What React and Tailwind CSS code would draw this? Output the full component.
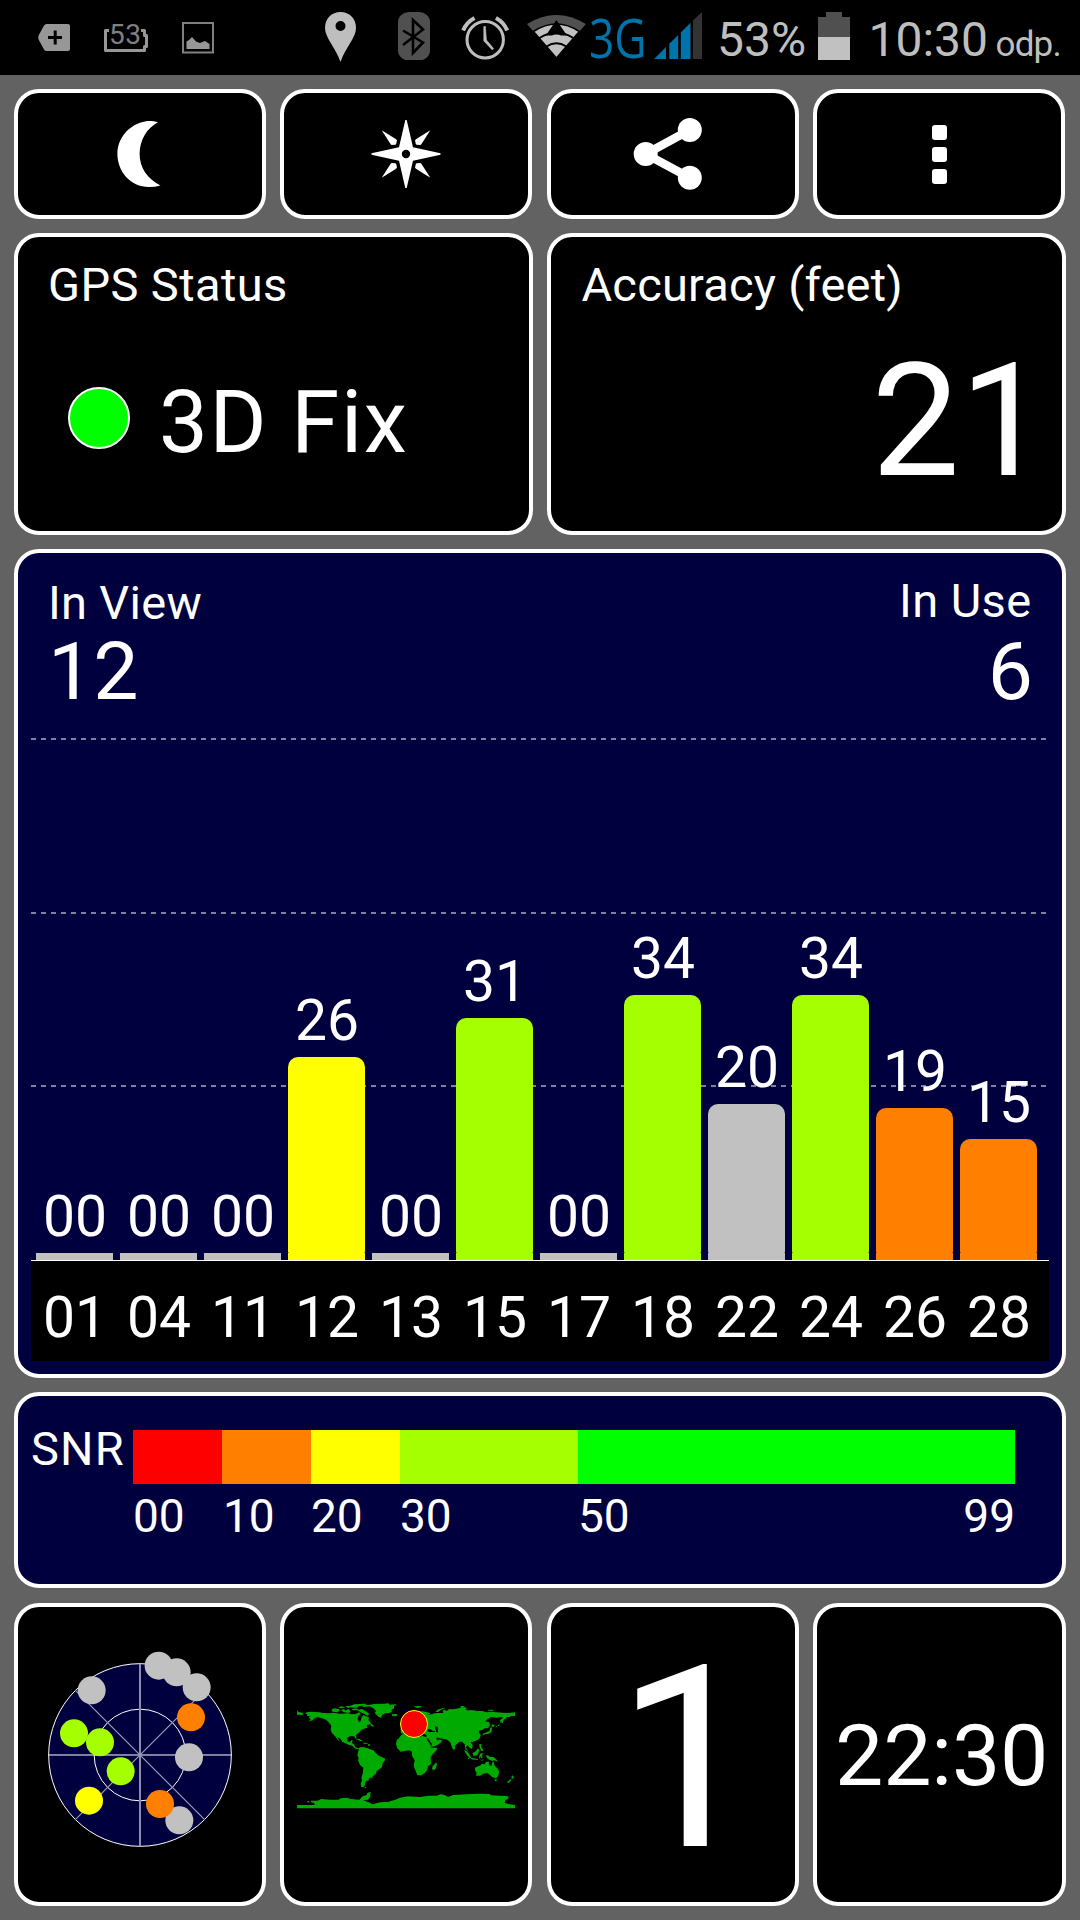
const satellites = [
  { prn: '01', snr: '00', height: 'h-[7px]', color: 'bg-[#c1c1c1]' },
  { prn: '04', snr: '00', height: 'h-[7px]', color: 'bg-[#c1c1c1]' },
  { prn: '11', snr: '00', height: 'h-[7px]', color: 'bg-[#c1c1c1]' },
  { prn: '12', snr: '26', height: 'h-[203px]', color: 'bg-[#ffff00]' },
  { prn: '13', snr: '00', height: 'h-[7px]', color: 'bg-[#c1c1c1]' },
  { prn: '15', snr: '31', height: 'h-[242px]', color: 'bg-[#a6ff00]' },
  { prn: '17', snr: '00', height: 'h-[7px]', color: 'bg-[#c1c1c1]' },
  { prn: '18', snr: '34', height: 'h-[265px]', color: 'bg-[#a6ff00]' },
  { prn: '22', snr: '20', height: 'h-[156px]', color: 'bg-[#c1c1c1]' },
  { prn: '24', snr: '34', height: 'h-[265px]', color: 'bg-[#a6ff00]' },
  { prn: '26', snr: '19', height: 'h-[152px]', color: 'bg-[#ff8000]' },
  { prn: '28', snr: '15', height: 'h-[121px]', color: 'bg-[#ff8000]' },
];

// Positions on the sky plot, in thirds of a pixel.
const sky = [
  [530, 216, '#c1c1c1'],
  [476, 196, '#c1c1c1'],
  [590, 261, '#c1c1c1'],
  [275, 270, '#c1c1c1'],
  [573, 351, '#ff8000'],
  [222, 399, '#a6ff00'],
  [300, 426, '#a6ff00'],
  [567, 471, '#c1c1c1'],
  [362, 513, '#a6ff00'],
  [267, 601, '#ffff00'],
  [538, 660, '#c1c1c1'],
  [480, 611, '#ff8000'],
];

function Panel({ className = '', children }) {
  return (
    <div className={`box-border shrink-0 rounded-[25px] border-4 border-white ${className}`}>
      {children}
    </div>
  );
}

function StatusBar() {
  return (
    <div className="flex h-[75px] shrink-0 items-start bg-black text-[#bebebe]">
      <svg className="ml-[38px] mt-6 h-[27px] w-8" viewBox="0 0 32 27">
        <path d="M8.5 0H30a2 2 0 0 1 2 2v23a2 2 0 0 1-2 2H8.5Q7 27 6 25.500L0.600 15.500Q0 13.500 .6 11.500L6 1.500Q7 0 8.500 0Z" fill="#979797" />
        <path d="M17.200 6.500v14M10 13.500h14" stroke="#000" strokeWidth="3" />
      </svg>
      <div className="relative ml-[34px] mt-[29px] h-[23px] w-11 text-[#808080]">
        <svg className="h-[23px] w-11" viewBox="0 0 44 23">
          <path d="M5 1.500H1.500V21.500H40.500V17.500H42.500V6.500H40.500V1.500H37" fill="none" stroke="#979797" strokeWidth="3" strokeLinejoin="round" />
        </svg>
        <span className="absolute left-[5px] top-[-8px] text-[28px] leading-none tracking-[0.5px]">53</span>
      </div>
      <svg className="ml-[34px] mt-[22px] h-8 w-8" viewBox="0 0 32 32">
        <rect x="1" y="1" width="30" height="29.500" fill="none" stroke="#808080" strokeWidth="2" />
        <path d="M4.500 27V19.500L7 18l3-3 4 4.500 4 1.500 5-2 4.500 3V27Z" fill="#979797" />
      </svg>
      <svg className="ml-[111px] mt-3 h-[50px] w-[31px]" viewBox="0 0 31 50">
        <path fillRule="evenodd" d="M15.500 0C24.500 0 31 6.500 31 16c0 10-11 20-15.500 34C11 36 0 26 0 16 0 6.500 6.500 0 15.500 0Zm0 9a5 5 0 1 0 0 10 5 5 0 0 0 0-10Z" fill="#bebebe" />
      </svg>
      <svg className="ml-[42px] mt-3 h-12 w-8" viewBox="0 0 32 48">
        <rect width="32" height="48.500" rx="11" ry="10" fill="#505050" />
        <path d="M5 18.500L25 30.500 15 41V8L25 17.500 5 33" fill="none" stroke="#000" strokeWidth="2.600" />
      </svg>
      <svg className="ml-[31px] mt-[15px] h-[46px] w-12" viewBox="461 15 48 46" fill="none" stroke="#bebebe">
        <circle cx="485.200" cy="39.700" r="18.200" strokeWidth="3" />
        <path d="M463.200 30.500A25 25 0 0 1 474.500 18M495.900 18A25 25 0 0 1 507.200 30.500" strokeWidth="4" />
        <path d="M483.800 26.500h1.600l1 13.500 7.200 8.600-1.300 1.300-8.500-9z" fill="#bebebe" strokeWidth=".6" />
      </svg>
      <svg className="ml-[18px] mt-[14px] h-[45px] w-[60px]" viewBox="527 14 60 45">
        <path d="M556.400 58L527 24Q556.400 6 585.900 24Z" fill="#505050" />
        <path d="M556.400 58L533.500 31.500Q556.400 16.500 579.300 31.500Z" fill="#c1c1c1" stroke="#000" strokeWidth="1.500" />
        <path d="M539.500 38Q556.400 27.500 573.300 38M546.500 46.500Q556.400 40 566.300 46.500" fill="none" stroke="#000" strokeWidth="2" />
        <path d="M556.400 20L567 35.500H560.500L556.400 31L552.300 35.500H545.800Z" fill="#000" />
        <path d="M552 28h8.800v7q-4.400-1.200-8.800 0z" fill="#000" />
      </svg>
      <div className="ml-[3px] mt-[9px] h-[56px] w-[54px]">
        <span className="inline-block origin-top-left translate-x-[-1px] scale-x-[0.82] whitespace-nowrap font-['Open_Sans'] text-[54px] leading-[56px] text-[#0073ab]">3G</span>
      </div>
      <svg className="ml-[10px] mt-3 h-[47px] w-12" viewBox="654 12 48 47">
        <path d="M654 59L666 47V59ZM669.300 59V43.800L678.200 34.900V59ZM680.800 59V32.500L690.500 22.800V59Z" fill="#0073ab" />
        <path d="M693 59V20.500L702 12V59Z" fill="#333" />
      </svg>
      <span className="ml-[15px] mt-[15.5px] w-[91px] whitespace-nowrap text-[48px] leading-none">53%</span>
      <svg className="ml-[10px] mt-3 h-12 w-8" viewBox="0 0 32 48">
        <path d="M0 5H8V0H24V5H32V26H0Z" fill="#505050" />
        <rect y="25" width="32" height="23" fill="#c1c1c1" />
      </svg>
      <span className="ml-[18.5px] mt-[15.5px] w-[127px] whitespace-nowrap text-[48px] leading-none">10:30</span>
      <span className="mt-[26.5px] whitespace-nowrap text-[35px] leading-none tracking-[-0.8px]">odp.</span>
    </div>
  );
}

function Toolbar() {
  const tile = 'flex h-[130px] w-[252px] items-center justify-center bg-black';
  return (
    <div className="mt-[14px] flex shrink-0 gap-[14px] pl-[14px]">
      <Panel className={tile}>
        <svg className="h-[70px] w-[70px]" viewBox="105 119 70 70">
          <path d="M158 122.300C154 120.800 149 120.700 146 121.200C129 124 117.400 138 117.400 154C117.400 171 130 187 149 187Q155 187 160.500 185.400C147 179 139.600 167 139.600 154C139.600 140 147 128 158 122.300Z" fill="#fff" />
        </svg>
      </Panel>
      <Panel className={tile}>
        <svg className="h-[70px] w-[70px]" viewBox="-35 -35 70 70" fill="#fff">
          <path fillRule="evenodd" d="M-.7-34H.7L7-6.800 34.500-.7V.7L7 6.800.7 34H-.7L-7 6.800-34.500.7V-.7L-7-6.800ZM0-4.200A4.200 4.200 0 1 0 0 4.200 4.200 4.200 0 0 0 0-4.200Z" />
          <path d="M-24.300-23.800L-10.300-15-9-13.800-9.800-10-10.500-9.300-14.500-9-15.500-10Z" />
          <path d="M24.300-23.800L10.300-15 9-13.800 9.800-10 10.500-9.300 14.500-9 15.500-10Z" />
          <path d="M-24.300 23.800L-10.300 15-9 13.800-9.800 10-10.500 9.300-14.500 9-15.500 10Z" />
          <path d="M24.300 23.800L10.300 15 9 13.800 9.800 10 10.500 9.300 14.500 9 15.500 10Z" />
        </svg>
      </Panel>
      <Panel className={`${tile} ml-px`}>
        <svg className="h-[76px] w-[76px] overflow-visible" viewBox="635 116 76 76" fill="#fff">
          <path d="M689.800 130L645.700 154L689.800 177.700" fill="none" stroke="#fff" strokeWidth="8.500" />
          <circle cx="645.700" cy="154" r="12" />
          <circle cx="689.800" cy="130" r="12" />
          <circle cx="689.800" cy="177.800" r="12" />
        </svg>
      </Panel>
      <Panel className={tile}>
        <div className="flex flex-col gap-[7px]">
          <div className="h-[15px] w-[15px] rounded-[3px] bg-white" />
          <div className="h-[15px] w-[15px] rounded-[3px] bg-white" />
          <div className="h-[15px] w-[15px] rounded-[3px] bg-white" />
        </div>
      </Panel>
    </div>
  );
}

function Chart() {
  return (
    <Panel className="mx-[14px] mt-[14px] flex h-[829px] flex-col bg-[#00003f]">
      <div className="flex h-[185px] shrink-0 justify-between pl-[30px] pr-[31px]">
        <div className="flex flex-col pt-[26px]">
          <span className="text-[47px] leading-none tracking-[0.3px]">In View</span>
          <span className="mt-[6px] text-[80.5px] leading-none">12</span>
        </div>
        <div className="flex flex-col items-end pt-6">
          <span className="-mr-[0.5px] text-[47px] leading-none tracking-[0.4px]">In Use</span>
          <span className="-mr-[2px] mt-[8px] text-[80.5px] leading-none">6</span>
        </div>
      </div>
      <div className="relative mx-[13px] h-[522px] shrink-0">
        <div className="absolute left-0 top-0 h-[2px] w-[1015px] bg-[repeating-linear-gradient(90deg,#8080a0_0px,#8080a0_5px,transparent_5px,transparent_10px)]" />
        <div className="absolute left-0 top-[174px] h-[2px] w-[1015px] bg-[repeating-linear-gradient(90deg,#8080a0_0px,#8080a0_5px,transparent_5px,transparent_10px)]" />
        <div className="absolute left-0 top-[347px] h-[2px] w-[1015px] bg-[repeating-linear-gradient(90deg,#8080a0_0px,#8080a0_5px,transparent_5px,transparent_10px)]" />
        <div className="relative flex h-full items-end gap-[7px] pl-[5px]">
          {satellites.map((s) => (
            <div key={s.prn} className="flex w-[77px] flex-col items-center">
              <span className="mb-[8px] pl-px text-[57px] leading-none">{s.snr}</span>
              {s.snr === '00' ? (
                <div className={`w-full ${s.height} ${s.color}`} />
              ) : (
                <div className={`flex w-full flex-col ${s.height}`}>
                  <div className={`w-full grow rounded-b-[1.5px] rounded-t-[10px] ${s.color}`} />
                  <div className={`h-[7px] w-full shrink-0 ${s.color}`} />
                </div>
              )}
            </div>
          ))}
        </div>
      </div>
      <div className="mx-[13px] flex h-[101px] shrink-0 gap-[7px] border-t border-white bg-black pl-[5px] pt-[28px]">
        {satellites.map((s) => (
          <span key={s.prn} className="w-[77px] pl-px text-center text-[57px] leading-none">{s.prn}</span>
        ))}
      </div>
    </Panel>
  );
}

function SnrLegend() {
  return (
    <Panel className="mx-[14px] mt-[14px] flex h-[196px] bg-[#00003f] text-[46px] leading-none">
      <span className="w-[115px] shrink-0 pl-[13px] pt-[29px] text-[47px] tracking-[1.2px]">SNR</span>
      <div className="flex flex-col pt-[34px]">
        <div className="flex h-[54px]">
          <div className="w-[89px] bg-[#ff0000]" />
          <div className="w-[89px] bg-[#ff8000]" />
          <div className="w-[89px] bg-[#ffff00]" />
          <div className="w-[178px] bg-[#a6ff00]" />
          <div className="w-[437px] bg-[#00ff00]" />
        </div>
        <div className="mt-[9px] flex">
          <span className="w-[89px]">00</span>
          <span className="w-[89px] pl-px">10</span>
          <span className="w-[89px]">20</span>
          <span className="w-[178px]">30</span>
          <span className="grow">50</span>
          <span>99</span>
        </div>
      </div>
    </Panel>
  );
}

function SkyPlot() {
  return (
    <svg className="h-[196px] w-[196px] overflow-visible" viewBox="126 169 588 588">
      <circle cx="420" cy="463" r="274" fill="#00003f" stroke="#fff" strokeWidth="3" />
      <circle cx="420" cy="463" r="137.500" fill="none" stroke="#fff" strokeWidth="3" />
      <path d="M146 463H694" stroke="#fff" strokeWidth="3" />
      <path d="M420 189V737" stroke="#8c8cab" strokeWidth="6" />
      <path d="M226 269L614 657M614 269L226 657" stroke="#9c9cb6" strokeWidth="3.500" />
      {sky.map(([x, y, fill]) => (
        <circle key={`${x}-${y}`} cx={x} cy={y - 1} r="42" fill={fill} />
      ))}
    </svg>
  );
}

function WorldMap() {
  return (
    <svg className="mt-[2px] h-[106px] w-[218px]" viewBox="51 68 654 318" fill="#0a0">
      {/* North and Central America */}
      <path d="M51 90L56 95 70 98 68 104 51 103ZM80 96L92 94 120 96 128 98 150 99 160 97 180 100 205 99 214 102 226 101 238 96 242 100 236 106 232 116 238 126 242 122 244 112 250 104 258 108 266 110 266 120 272 128 280 138 272 132 260 134 262 142 250 146 244 148 238 156 230 162 228 166 230 178 226 174 222 168 210 167 202 172 202 182 208 186 214 180 218 180 216 188 222 192 226 200 234 204 244 200 240 206 228 206 216 196 206 193 194 188 186 184 182 176 172 170 178 182 174 180 164 166 156 158 152 148 154 136 146 126 138 118 126 114 112 110 104 114 98 120 84 124 92 118 86 110 92 108 80 106 82 102 76 100Z" />
      <path d="M154 88l8-4 14 2 4 6-10 4-12-2zM182 90l10-4 4 6 8-6 8 6-4 6-16-2zM174 80l12-2 10 4-14 2zM196 78l10-2 8 4-10 3zM208 78l14-6 18-1 22-1-8 5-16 2-8 5-12 0zM216 86l12-2 8 4 10-2 6 4 8 4 8 8-6 4-10-6-10-4-10-6-14 0z" />
      <path d="M242 76L256 74 270 73 282 71 310 70 326 69 328 73 346 72 352 74 342 76 342 84 334 90 336 94 328 98 316 99 306 104 304 112 296 110 290 104 284 98 288 92 280 84 268 78 252 80Z" />
      <path d="M336 102l14-1 4 3-8 4-10-1zM228 176l10 0 10 6-8 0zM250 187l12 0 0 3-12 0zM264 192h6v4h-6zM272 130l10 6-2 3-8-3z" />
      {/* South America */}
      <path d="M236 208L240 202 248 200 264 204 270 207 280 210 290 220 296 226 304 229 316 235 314 242 308 248 306 260 296 268 290 272 288 280 278 288 278 292 268 292 266 300 256 304 256 310 252 320 244 320 242 310 246 300 244 294 248 280 250 262 240 254 234 240 236 234 232 224Z" />
      <path d="M254 321h4v3h-4z" />
      {/* Africa and Madagascar */}
      <path d="M362 166L372 158 400 154 404 164 420 170 426 166 438 170 442 180 450 192 454 202 472 202 468 212 458 222 452 230 452 240 454 250 444 258 442 268 434 278 424 285 412 285 408 274 402 260 402 250 404 240 396 226 396 214 388 210 374 212 362 214 352 204 348 192 350 180 358 172Z" />
      <path d="M468 246l3 6-4 14-7 4-4-4 2-10 6-4z" />
      {/* Europe and Asia */}
      <path d="M362 156L362 146 374 146 372 138 384 130 396 124 394 118 380 118 378 112 390 104 402 96 418 92 436 94 452 99 444 104 456 102 462 99 478 98 490 98 488 91 494 88 500 92 508 86 520 87 536 84 546 80 560 84 558 90 582 90 590 92 606 92 620 96 634 94 650 96 680 98 705 96 705 107 692 107 690 110 678 110 680 114 668 120 662 128 660 120 670 112 660 110 650 112 634 110 620 118 616 124 626 124 630 134 624 144 614 144 606 150 598 150 596 156 602 164 600 172 594 178 580 184 572 186 578 194 576 206 568 202 562 194 558 202 566 214 556 206 554 192 546 184 538 184 532 190 524 196 526 206 520 208 514 196 512 188 504 180 494 176 478 174 470 170 474 176 486 180 484 186 476 192 464 198 454 200 446 184 438 174 440 164 430 160 424 150 412 158 400 148 390 146 378 158 366 160Z" />
      <path d="M443 147h8l8 5 6 0 0 3-16 0-6-2zM465 138l8 2 0 10 2 6-6 0-2-8zM440 174l4 0 12 18 0 6-6-6zM468 174l4 0 6 6-6 0z" fill="#000" />
      <path d="M400 79l12-2 14 0-4 4-10 2zM466 94l6-6 20-6 4 1-14 6-8 6zM540 77l10 0 8 5-12 0zM622 88l16 0 4 3-16 0zM666 116l6 0-4 12-4 0zM636 132l8 2-2 5-8 0zM634 140l2 4-2 12-8 4-10 2-8 2 0-4 12-4 8-4 2-8zM656 132l3 0-2 5-4 0zM648 138l4 0-2 3-4 0z" />
      {/* South-east Asia */}
      <path d="M552 208l8 4 8 10 6 10 -4 2-10-10zM578 218l8-4 8-10 4 6-4 12-6 4-8 0zM572 234l12 0 10 3 0 2-20-2zM598 190l6 2 0 8 4 6 2 6-6 0-4-8-2-6zM600 220l10-2-4 6 2 10-4 0-2-6-3 8-2-6zM618 224l8 2 4 4 10 0 8 6 6 8-12-4-6 2-8-4-8-6zM600 238l12 0-6 3zM564 232h4v4h-4z" />
      {/* Australia and New Zealand */}
      <path d="M585 262L594 258 600 256 606 250 614 252 618 244 628 244 626 252 634 258 638 242 642 248 644 256 652 264 657 272 656 284 648 294 636 290 630 284 622 278 610 280 600 286 588 286 590 278 585 270Z" />
      <path d="M644 297h7l-2 6h-4zM696 284l3 4 3 2-5 6-3-2zM692 296l2 4-8 8-5-2z" />
      {/* Antarctica */}
      <path d="M51 374L104 374 102 368 94 366 92 361 112 361 124 356 150 358 176 358 182 354 200 352 212 356 238 358 248 348 260 344 262 338 272 334 270 350 264 358 250 360 266 366 278 372 300 366 326 364 346 358 360 352 384 348 420 350 446 346 470 346 482 342 494 344 504 350 520 344 560 342 596 340 630 341 632 345 660 346 684 348 686 354 676 360 674 368 690 372 705 374 705 384 51 384Z" />
      <path d="M82 362h6v4h-6z" />
      <circle cx="402" cy="131" r="40.500" fill="#f00" stroke="#ff0" strokeWidth="3" />
    </svg>
  );
}

export default function App() {
  return (
    <div className="flex h-[1920px] w-[1080px] flex-col overflow-hidden bg-[#626262] font-['Roboto',sans-serif] text-white">
      <StatusBar />
      <Toolbar />
      <div className="mt-[14px] flex shrink-0 gap-[14px] pl-[14px]">
        <Panel className="h-[302px] w-[519px] bg-black">
          <div className="pl-[30px] pt-6 text-[47px] leading-none tracking-[0.4px]">GPS Status</div>
          <div className="mt-[71px] flex items-start pl-[50px]">
            <div className="mt-2 h-[62px] w-[62px] rounded-full border-2 border-white bg-[#00ff00]" />
            <span className="ml-[29px] text-[87px] leading-none tracking-[1.6px]">3D Fix</span>
          </div>
        </Panel>
        <Panel className="h-[302px] w-[519px] bg-black">
          <div className="pl-[30.5px] pt-6 text-[47px] leading-none tracking-[0.2px]">Accuracy (feet)</div>
          <div className="mt-[35px] pr-[14px] text-right text-[157px] leading-none">21</div>
        </Panel>
      </div>
      <Chart />
      <SnrLegend />
      <div className="mt-[15px] flex shrink-0 gap-[14px] pl-[14px]">
        <Panel className="flex h-[303px] w-[252px] items-center justify-center bg-black">
          <SkyPlot />
        </Panel>
        <Panel className="flex h-[303px] w-[252px] items-center justify-center bg-black">
          <WorldMap />
        </Panel>
        <Panel className="ml-px h-[303px] w-[252px] bg-black pl-[65px] pt-6 text-[255px] leading-none">1</Panel>
        <Panel className="h-[303px] w-[253px] whitespace-nowrap bg-black pl-[18px] pt-[105.5px] text-[86px] leading-none tracking-[-0.2px]">22:30</Panel>
      </div>
    </div>
  );
}
